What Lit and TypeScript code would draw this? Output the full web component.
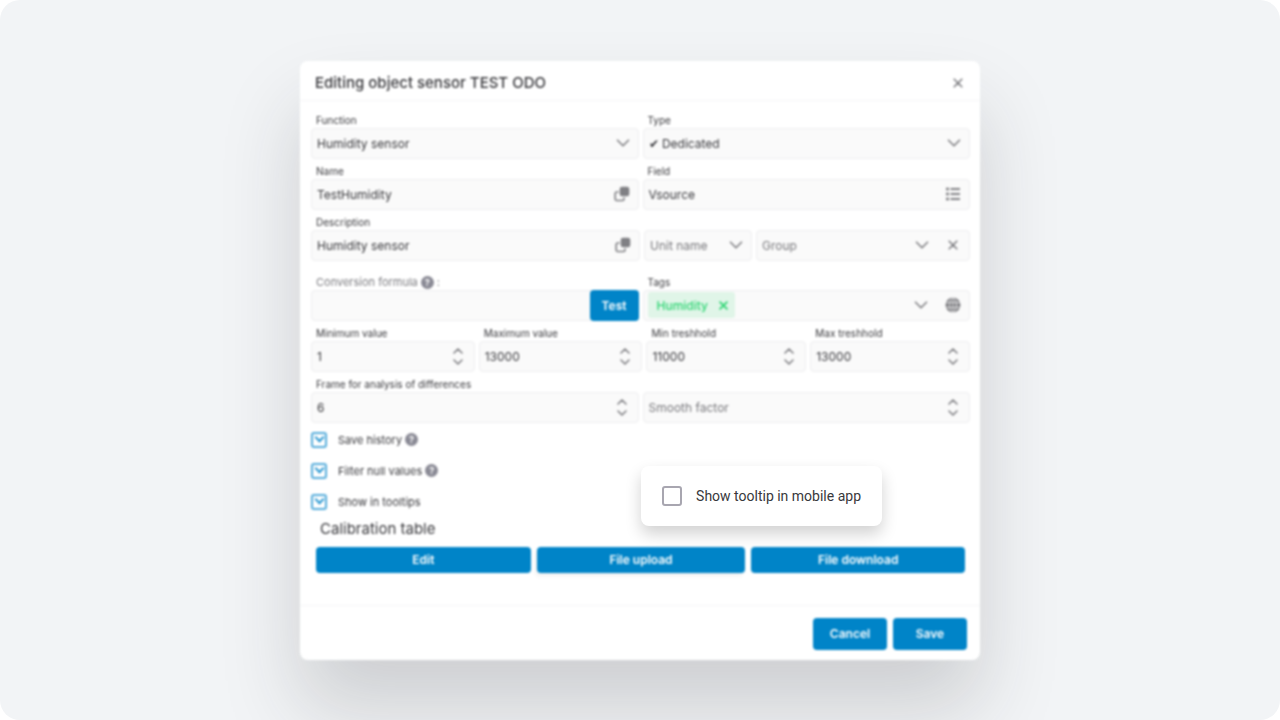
import { LitElement, html, css, svg, nothing } from "lit";
import { customElement, property } from "lit/decorators.js";

const icons = {
  chevron: svg`<svg width="14" height="8" viewBox="0 0 14 8"><path d="M1.500 1.200l5.500 5.500 5.500-5.500"/></svg>`,
  up: svg`<svg width="10" height="6" viewBox="0 0 10 6"><path d="M1 5l4-4 4 4"/></svg>`,
  down: svg`<svg width="10" height="6" viewBox="0 0 10 6"><path d="M1 1l4 4 4-4"/></svg>`,
  cross: svg`<svg width="10" height="10" viewBox="0 0 10 10"><path d="M1.200 1.200l7.600 7.600M8.800 1.200l-7.600 7.600"/></svg>`,
  copy: svg`<svg width="16" height="16" viewBox="0 0 16 16"><rect x="6.500" y="1.500" width="8" height="8" rx="1.5" fill="currentColor"/><path d="M4 6H2.500A1.500 1.500 0 0 0 1.200 7.500v5.500A1.500 1.500 0 0 0 2.500 14.500H8.500a1.500 1.500 0 0 0 1.500-1.500V12"/></svg>`,
  list: svg`<svg width="16" height="14" viewBox="0 0 16 14"><path stroke-width="2.6" stroke-linecap="butt" d="M1 2h3M1 7h3M1 12h3"/><path stroke-width="1.8" stroke-linecap="butt" d="M5.500 2h9.500M5.500 7h9.500M5.500 12h9.500"/></svg>`,
  globe: svg`<svg width="16" height="16" viewBox="0 0 16 16"><circle cx="8" cy="8" r="7.500" fill="currentColor" stroke="none"/><g stroke="#fafafa" stroke-width="0.700"><ellipse cx="8" cy="8" rx="3.600" ry="7.500"/><path d="M1 5.500h14M1 10.500h14M8 0v16"/></g></svg>`,
};

const base = css`
  *, *::before, *::after { box-sizing: border-box; }
  button, input, select { font: inherit; color: inherit; margin: 0; }
  svg { display: block; flex: none; fill: none; stroke: currentColor; stroke-width: 1.6; stroke-linecap: round; stroke-linejoin: round; }
  .icon-button { display: grid; place-items: center; width: 16px; padding: 0; border: 0; background: none; color: #808084; cursor: pointer; }
  .help { display: inline-grid; place-items: center; width: 13px; height: 13px; padding: 0; border: 0; border-radius: 50%; background: #8a8a95; color: #fff; font-size: 9px; font-weight: 700; line-height: 13px; cursor: help; }
`;

type Kind = "select" | "text" | "number" | "formula" | "tags";

@customElement("sensor-field")
export class SensorField extends LitElement {
  @property() kind: Kind = "text";
  @property() label = "";
  @property() value = "";
  @property() placeholder = "";
  @property() action = "";

  static styles = [base, css`
    :host { display: flex; flex-direction: column; justify-content: flex-end; min-width: 0; }
    .label { display: flex; align-items: center; gap: 3px; height: 15px; padding-left: 5px; font-size: 10px; line-height: 14px; white-space: nowrap; }
    .muted { color: #7c7c80; font-size: 11px; }
    .box { display: grid; grid-template-columns: minmax(0, 1fr) auto; align-items: stretch; height: 31px; border: 1px solid #eeeef0; border-radius: 4px; background: #fafafa; }
    .control { grid-column: 1 / -1; grid-row: 1; width: 100%; min-width: 0; padding: 0 36px 0 5px; border: 0; outline: 0; border-radius: 4px; appearance: none; background: none; font-size: 12px; }
    .control[type="number"] { appearance: textfield; }
    .control::-webkit-inner-spin-button { display: none; }
    .control::placeholder { color: #77777b; opacity: 1; }
    .empty { padding-right: 24px; color: #77777b; }
    .tools { grid-column: 2; grid-row: 1; display: flex; align-items: center; gap: 16px; padding-right: 8px; color: #808084; pointer-events: none; }
    .tools button { pointer-events: auto; }
    .stepper { display: grid; gap: 5px; padding-right: 3px; }
    .stepper button { width: 10px; }
    .test { grid-column: 2; grid-row: 1; align-self: stretch; margin: -1px; padding: 0 12px; border: 0; border-radius: 4px; background: #0084c8; color: #fff; font-size: 12px; font-weight: 600; }
    .tags { grid-column: 1; grid-row: 1; display: flex; align-items: center; padding-left: 4px; }
    .tag { display: flex; align-items: center; gap: 7px; height: 26px; padding: 0 4px 0 9px; border-radius: 3px; background: #e0f5e8; color: #2ed573; font-size: 12px; font-weight: 500; }
    .tag .icon-button { color: inherit; }
    .tag svg { width: 9px; height: 9px; stroke-width: 2; }
  `];

  private control() {
    if (this.kind === "select") {
      return html`<select id="c" class="control ${this.value ? "" : "empty"}" aria-label=${this.label || this.placeholder}>
        <option>${this.value || this.placeholder}</option></select>`;
    }
    if (this.kind === "tags") {
      return html`<div class="tags" id="c" role="group" aria-label=${this.label}>
        <span class="tag">${this.value}<button class="icon-button" aria-label="Remove tag">${icons.cross}</button></span></div>`;
    }
    return html`<input id="c" class="control" type=${this.kind === "number" ? "number" : "text"}
      aria-label=${this.label || this.placeholder} .value=${this.value} placeholder=${this.placeholder} />`;
  }

  private tools() {
    if (this.kind === "formula") return html`<button class="test">Test</button>`;
    if (this.kind === "number") {
      return html`<div class="tools"><span class="stepper">
        <button class="icon-button" aria-label="Increase">${icons.up}</button>
        <button class="icon-button" aria-label="Decrease">${icons.down}</button></span></div>`;
    }
    const chevron = this.kind === "select"
      ? icons.chevron
      : this.kind === "tags" ? html`<button class="icon-button" aria-label="Open tags">${icons.chevron}</button>` : nothing;
    const extra = this.action === "copy" ? icons.copy : this.action === "list" ? icons.list
      : this.action === "clear" ? icons.cross : this.action === "globe" ? icons.globe : null;
    return html`<div class="tools">${chevron}${extra
      ? html`<button class="icon-button" aria-label=${this.action}>${extra}</button>` : nothing}</div>`;
  }

  render() {
    const formula = this.kind === "formula";
    return html`
      ${this.label ? html`<label class="label ${formula ? "muted" : ""}" for="c">${this.label}
        ${formula ? html`<button class="help" aria-label="Help">?</button> :` : nothing}</label>` : nothing}
      <div class="box">${this.control()}${this.tools()}</div>`;
  }
}

@customElement("app-root")
export class AppRoot extends LitElement {
  static styles = [base, css`
    :host { display: block; background: #fff; color: #38383c; font-family: Inter, "Liberation Sans", sans-serif; }
    .stage { display: flex; flex-direction: column; align-items: center; justify-content: center; min-height: 100vh; padding: 24px; border-radius: 20px; background: #f2f4f6; overflow: hidden; }
    .layer { position: relative; width: 100%; max-width: 680px; }
    .dialog { border-radius: 8px; background: #fff; box-shadow: 0 48px 80px rgba(40, 40, 46, 0.18); filter: blur(1px); }
    .header { display: flex; align-items: center; justify-content: space-between; height: 40px; padding: 5px 14px 0 15px; border-bottom: 1px solid #f5f5f7; }
    .title { margin: 0; font-size: 15px; line-height: 20px; font-weight: 500; }
    .body { padding: 12px 10px 32px 11px; }
    .form { display: grid; gap: 5px; }
    .row { display: grid; grid-template-columns: 1fr 1fr; gap: 4px; }
    .row-unit { grid-template-columns: 329fr 108fr 214fr; }
    .row-spaced { padding-top: 9px; }
    .row-limits { grid-template-columns: 164fr 164fr 160fr 160fr; }
    .checks { display: grid; gap: 15px; padding-top: 9px; }
    .check { display: flex; align-items: center; gap: 3px; height: 16px; font-size: 11px; }
    .check label { display: flex; align-items: center; gap: 11px; }
    .box { appearance: none; display: grid; place-items: center; width: 16px; height: 16px; border: 2px solid #55acdb; border-radius: 3px; background: #fff; }
    .box:checked::after { content: ""; width: 7px; height: 7px; border: solid #2b98d2; border-width: 0 2px 2px 0; transform: translateY(-2px) rotate(45deg); }
    .subtitle { margin: 0; padding: 9px 9px 8px; font-size: 15px; line-height: 20px; font-weight: 400; }
    .actions { display: grid; grid-template-columns: 214fr 208fr 213fr; gap: 6px; padding: 0 5px; }
    .button { height: 26px; padding: 0 15px; border: 0; border-radius: 4px; background: #0084c8; color: #fff; font-size: 12px; font-weight: 600; cursor: pointer; }
    .raised { box-shadow: -2px 3px 4px rgba(0, 0, 0, 0.06); }
    .footer { display: flex; justify-content: flex-end; gap: 6px; padding: 12px 13px 10px; border-top: 1px solid #f5f5f7; }
    .footer .button { min-width: 74px; height: 32px; }
    .callout { position: absolute; right: 98px; bottom: 134px; display: flex; align-items: center; gap: 14px; height: 60px; padding: 0 21px; border-radius: 8px; background: #fff; box-shadow: 0 8px 16px rgba(0, 0, 0, 0.18); font-family: Roboto, Inter, sans-serif; font-size: 14px; white-space: nowrap; }
    .callout .box { width: 20px; height: 20px; border-color: #a8a6b0; }
  `];

  private check(id: string, text: string, help: boolean) {
    return html`<div class="check"><label for=${id}><input class="box" type="checkbox" id=${id} checked />${text}</label>
      ${help ? html`<button class="help" aria-label="Help">?</button>` : nothing}</div>`;
  }

  render() {
    return html`
      <main class="stage"><div class="layer">
        <section class="dialog">
          <header class="header">
            <h1 class="title">Editing object sensor TEST ODO</h1>
            <button class="icon-button" aria-label="Close">${icons.cross}</button>
          </header>
          <div class="body">
            <div class="form">
              <div class="row">
                <sensor-field kind="select" label="Function" value="Humidity sensor"></sensor-field>
                <sensor-field kind="select" label="Type" value="✔ Dedicated"></sensor-field>
              </div>
              <div class="row">
                <sensor-field label="Name" value="TestHumidity" action="copy"></sensor-field>
                <sensor-field label="Field" value="Vsource" action="list"></sensor-field>
              </div>
              <div class="row row-unit">
                <sensor-field label="Description" value="Humidity sensor" action="copy"></sensor-field>
                <sensor-field kind="select" placeholder="Unit name"></sensor-field>
                <sensor-field kind="select" placeholder="Group" action="clear"></sensor-field>
              </div>
              <div class="row row-spaced">
                <sensor-field kind="formula" label="Conversion formula"></sensor-field>
                <sensor-field kind="tags" label="Tags" value="Humidity" action="globe"></sensor-field>
              </div>
              <div class="row row-limits">
                <sensor-field kind="number" label="Minimum value" value="1"></sensor-field>
                <sensor-field kind="number" label="Maximum value" value="13000"></sensor-field>
                <sensor-field kind="number" label="Min treshhold" value="11000"></sensor-field>
                <sensor-field kind="number" label="Max treshhold" value="13000"></sensor-field>
              </div>
              <div class="row">
                <sensor-field kind="number" label="Frame for analysis of differences" value="6"></sensor-field>
                <sensor-field kind="number" placeholder="Smooth factor"></sensor-field>
              </div>
            </div>
            <div class="checks">
              ${this.check("history", "Save history", true)}
              ${this.check("nulls", "Filter null values", true)}
              ${this.check("tooltips", "Show in tooltips", false)}
            </div>
            <h2 class="subtitle">Calibration table</h2>
            <div class="actions">
              <button class="button">Edit</button>
              <button class="button raised">File upload</button>
              <button class="button">File download</button>
            </div>
          </div>
          <footer class="footer">
            <button class="button">Cancel</button>
            <button class="button">Save</button>
          </footer>
        </section>
        <label class="callout"><input class="box" type="checkbox" />Show tooltip in mobile app</label>
      </div></main>`;
  }
}
